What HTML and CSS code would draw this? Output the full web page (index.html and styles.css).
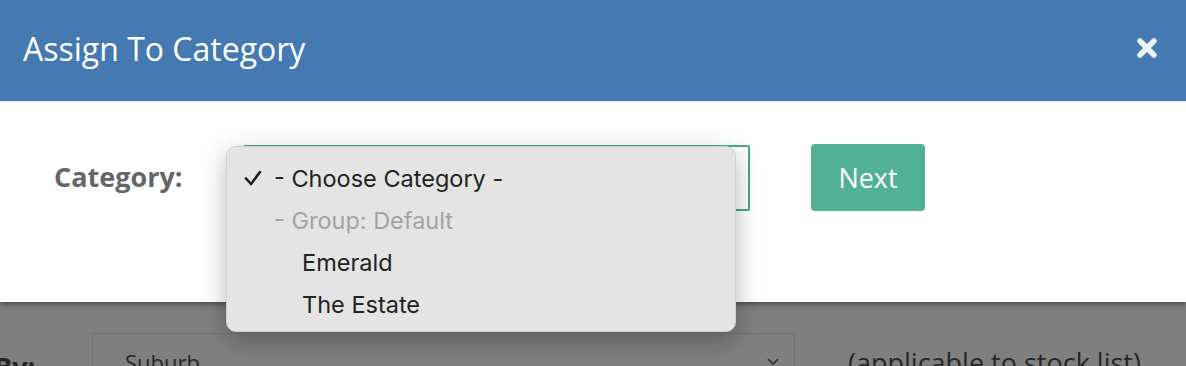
FILE: index.html
```html
<!DOCTYPE html>
<html lang="en">
<head>
    <meta charset="UTF-8">
    <meta name="viewport" content="width=device-width, initial-scale=1.0">
    <title>Assign To Category</title>
    <link rel="stylesheet" href="styles.css">
</head>
<body>
    <!-- 弹窗 -->
    <div class="modal">
        <div class="modal-header">
            <h2>Assign To Category</h2>
            <span class="close-button">
                <svg width="22" height="22" viewBox="0 0 22 22">
                    <path d="M4 4 L18 18 M18 4 L4 18" stroke="#eef3fa" stroke-width="5.5" stroke-linecap="round"/>
                </svg>
            </span>
        </div>
        <div class="modal-body">
            <label class="field-label">Category:</label>
            <div class="select-wrap">
                <div class="select-box"></div>
                <!-- 原生下拉菜单 -->
                <div class="dropdown">
                    <div class="option selected">
                        <svg class="check" width="18" height="18" viewBox="0 0 18 18">
                            <path d="M2 9.5 L7 15 L16 3" fill="none" stroke="#1e1e1e" stroke-width="2.6" stroke-linecap="round" stroke-linejoin="round"/>
                        </svg>
                        - Choose Category -
                    </div>
                    <div class="option group">- Group: Default</div>
                    <div class="option child">Emerald</div>
                    <div class="option child">The Estate</div>
                </div>
            </div>
            <button class="next-button">Next</button>
        </div>
    </div>

    <!-- 背景页面 -->
    <div class="backdrop">
        <span class="bg-label">By:</span>
        <div class="bg-select">
            <span>Suburb</span>
            <svg width="14" height="10" viewBox="0 0 14 10">
                <path d="M2 2 L7 7 L12 2" fill="none" stroke="#2c2c2c" stroke-width="1.6"/>
            </svg>
        </div>
        <span class="bg-note">(applicable to stock list)</span>
    </div>
</body>
</html>
```

FILE: styles.css
```css
* {
    margin: 0;
    padding: 0;
    box-sizing: border-box;
}

body {
    width: 1186px;
    height: 366px;
    overflow: hidden;
    background-color: #7f7f7f;
    font-family: 'Open Sans', Arial, sans-serif;
}

.modal {
    position: relative;
    z-index: 2;
    background-color: white;
    box-shadow: 0 2px 6px rgba(0, 0, 0, 0.45);
}

.modal-header {
    height: 102px;
    background-color: #4479b2;
    border-bottom: 1px solid #e4e6e2;
    display: flex;
    align-items: center;
    justify-content: space-between;
    padding: 0 28px 4px 23px;
}

.modal-header h2 {
    font-weight: 400;
    font-size: 32px;
    color: white;
}

.close-button {
    display: flex;
    margin-top: -2px;
}

.modal-body {
    height: 200px;
    display: flex;
    align-items: flex-start;
    padding: 42px 0 0 54px;
}

.field-label {
    font-weight: 700;
    font-size: 27px;
    color: #666;
    margin-top: 14px;
    width: 189px;
}

.select-wrap {
    position: relative;
}

.select-box {
    width: 507px;
    height: 66px;
    margin-top: 1px;
    border: 2px solid #4aa98a;
    border-radius: 2px;
}

.dropdown {
    position: absolute;
    left: -17px;
    top: 2px;
    width: 510px;
    height: 186px;
    background-color: #e3e4e3;
    border: 1px solid #cfd0cf;
    border-radius: 10px;
    box-shadow: 0 8px 26px rgba(0, 0, 0, 0.28);
    padding-top: 10px;
    font-family: Inter, 'Noto Sans', sans-serif;
    font-size: 23.5px;
    color: #222;
}

.option {
    height: 42px;
    display: flex;
    align-items: center;
    padding-left: 47px;
}

.option.selected {
    padding-left: 17px;
    gap: 12px;
}

.option.group {
    color: #a3a3a3;
}

.option.child {
    padding-left: 75px;
}

.next-button {
    margin-left: 61px;
    width: 114px;
    height: 67px;
    background-color: #52b095;
    color: white;
    border: none;
    border-radius: 4px;
    font-family: 'Open Sans', Arial, sans-serif;
    font-size: 27px;
}

.backdrop {
    display: flex;
    align-items: flex-start;
    padding-top: 31px;
    color: #262626;
    font-size: 27px;
}

.bg-label {
    font-weight: 700;
    margin: 15px 0 0 -6px;
    width: 98px;
}

.bg-select {
    width: 703px;
    height: 70px;
    border: 1px solid #737373;
    display: flex;
    align-items: center;
    justify-content: space-between;
    padding: 0 14px 12px 32px;
    font-size: 22px;
}

.bg-note {
    margin: 11px 0 0 53px;
}
```
